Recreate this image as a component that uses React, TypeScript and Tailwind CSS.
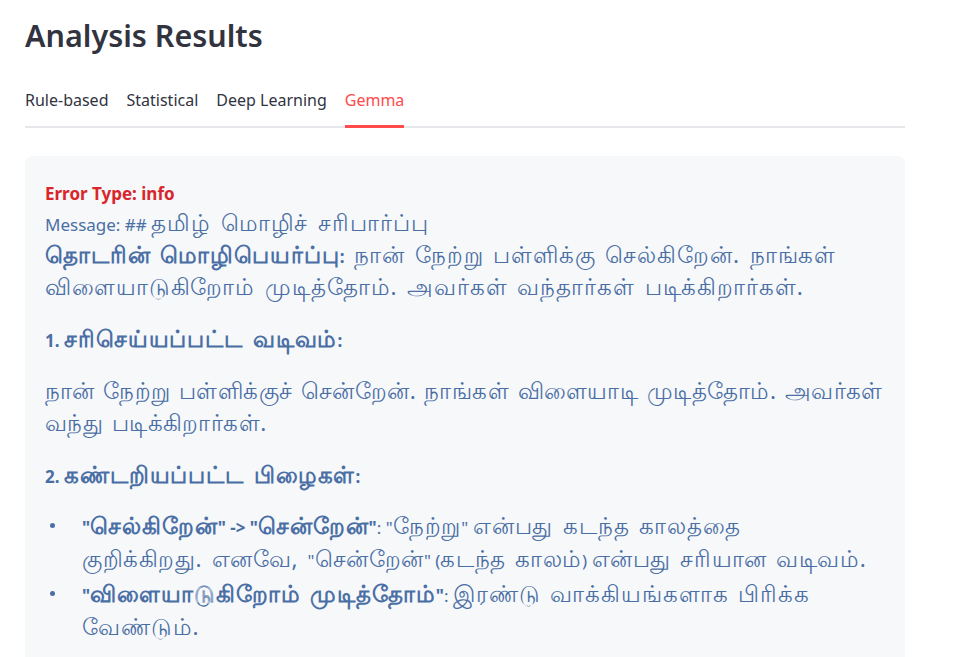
import React from 'react';

const tabs = ['Rule-based', 'Statistical', 'Deep Learning', 'Gemma'];

// latin bits run smaller than the tamil glyphs
function L({ children }: { children: React.ReactNode }) {
  return <span className="text-[17px] leading-[0] tracking-normal [word-spacing:0]">{children}</span>;
}

function Dot() {
  return (
    <span className="flex w-[37px] shrink-0 pl-[5px] pt-[14px]">
      <span className="h-[5px] w-[5px] rounded-full bg-[#4a6fa5]" />
    </span>
  );
}

export default function App() {
  const active = 'Gemma';

  return (
    <div className="min-h-screen bg-white pl-[25px] pr-[60px] pt-[12px] font-['Source_Sans_Pro','Noto_Sans',sans-serif] text-[#31333f]">
      <h1 className="text-[30.5px] font-semibold leading-[46px]">Analysis Results</h1>

      <div className="mt-[30px] flex w-[880px] gap-[18px] border-b-2 border-[#e6e7ea]">
        {tabs.map((t) => (
          <div
            key={t}
            className={
              t === active
                ? '-mb-[2px] border-b-[3px] border-[#ff4b4b] pb-[12px] text-[16px] leading-[24px] text-[#ff4b4b]'
                : 'pb-[14px] text-[16px] leading-[24px]'
            }
          >
            {t}
          </div>
        ))}
      </div>

      <div className="mt-[28px] w-[880px] whitespace-nowrap rounded-lg bg-[#f7f8fa] px-[20px] pt-[22px] pb-[24px] text-[22.5px] leading-[32px] tracking-[0.9px] text-[#4a6fa5] [word-spacing:3px]">
        <div className="text-[17px] font-bold tracking-normal text-[#d9262b] [word-spacing:0]">Error Type: info</div>
        <div className="-mt-[3px]">
          <L>Message: ## </L>தமிழ் மொழிச் சரிபார்ப்பு
        </div>
        <p>
          <span className="font-bold">தொடரின் மொழிபெயர்ப்பு<L>:</L></span> நான் நேற்று பள்ளிக்கு செல்கிறேன். நாங்கள்
          <br />
          விளையாடுகிறோம் முடித்தோம். அவர்கள் வந்தார்கள் படிக்கிறார்கள்.
        </p>

        <p className="mt-[20px] font-bold">
          <L>1. </L>சரிசெய்யப்பட்ட வடிவம்<L>:</L>
        </p>

        <p className="mt-[20px] tracking-[0.45px] [word-spacing:2px]">
          நான் நேற்று பள்ளிக்குச் சென்றேன். நாங்கள் விளையாடி முடித்தோம். அவர்கள்
          <br />
          வந்து படிக்கிறார்கள்.
        </p>

        <p className="mt-[20px] font-bold">
          <L>2. </L>கண்டறியப்பட்ட பிழைகள்<L>:</L>
        </p>

        <ul className="mt-[18px] leading-[33px]">
          <li className="flex">
            <Dot />
            <div>
              <span className="font-bold">
                <L>"</L>செல்கிறேன்<L>" -&gt; "</L>சென்றேன்<L>"</L>
              </span>
              <L>: "</L>நேற்று<L>" </L>என்பது கடந்த காலத்தை
              <br />
              <span className="tracking-[0.6px]">
                குறிக்கிறது. எனவே, <L>"</L>சென்றேன்<L>" (</L>கடந்த காலம்<L>) </L>என்பது சரியான வடிவம்.
              </span>
            </div>
          </li>
          <li className="mt-[2px] flex">
            <Dot />
            <div>
              <span className="font-bold">
                <L>"</L>விளையாடுகிறோம் முடித்தோம்<L>"</L>
              </span>
              <L>: </L>இரண்டு வாக்கியங்களாக பிரிக்க
              <br />
              வேண்டும்.
            </div>
          </li>
        </ul>
      </div>
    </div>
  );
}
